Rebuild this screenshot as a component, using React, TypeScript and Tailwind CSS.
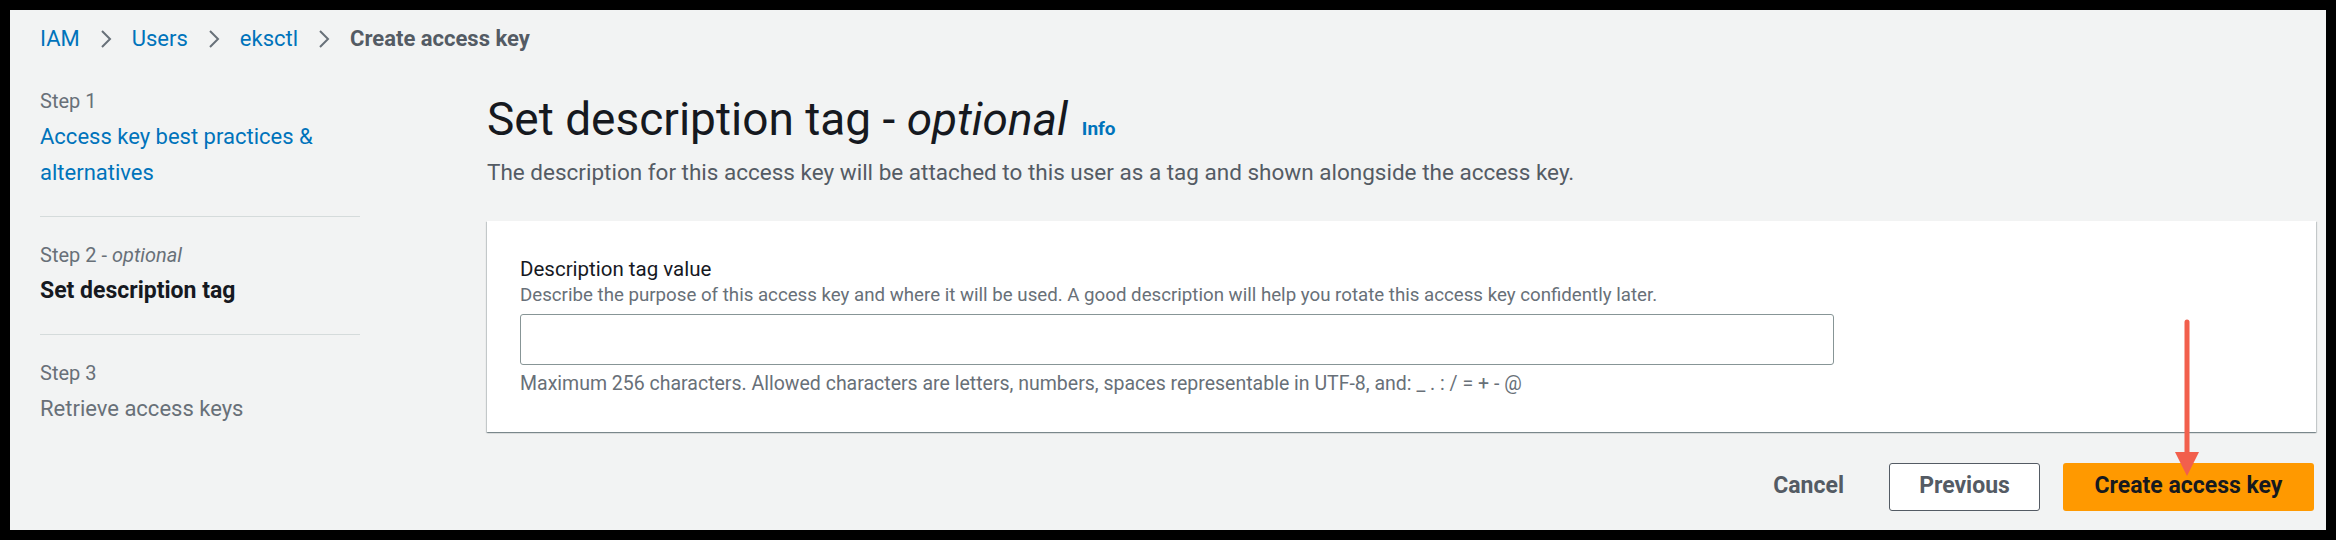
import React from 'react';

const Chevron: React.FC = () => (
  <svg width="16" height="22" viewBox="0 0 16 22" className="mx-[18px]">
    <path d="M4 3 L12 11 L4 19" fill="none" stroke="#687078" strokeWidth="2" />
  </svg>
);

const steps = [
  { label: 'Step 1', optional: false, title: 'Access key best practices & alternatives', state: 'link' },
  { label: 'Step 2', optional: true, title: 'Set description tag', state: 'active' },
  { label: 'Step 3', optional: false, title: 'Retrieve access keys', state: 'disabled' },
];

export default function App() {
  return (
    <div className="bg-black p-[10px] font-['Roboto',sans-serif]">
      <div className="relative h-[520px] bg-[#f2f3f3]">
        {/* breadcrumb */}
        <nav className="flex items-center pl-[30px] pt-[17px] text-[22px] leading-[24px]">
          <a className="text-[#0073bb]">IAM</a>
          <Chevron />
          <a className="text-[#0073bb]">Users</a>
          <Chevron />
          <a className="text-[#0073bb]">eksctl</a>
          <Chevron />
          <span className="font-bold text-[#545b64]">Create access key</span>
        </nav>

        <div className="flex">
          {/* wizard steps */}
          <ul className="ml-[30px] mt-[38px] w-[320px] shrink-0">
            {steps.map((s, i) => (
              <li key={s.label} className={i < steps.length - 1 ? 'border-b border-[#d5dbdb] pb-[25px] mb-[26px]' : ''}>
                <div className="text-[20px] leading-[24px] text-[#687078]">
                  {s.label}
                  {s.optional && <span> - <i>optional</i></span>}
                </div>
                <div
                  className={
                    'mt-[6px] leading-[36px] ' +
                    (s.state === 'link'
                      ? 'text-[22px] text-[#0073bb]'
                      : s.state === 'active'
                        ? 'text-[23px] font-bold text-[#16191f]'
                        : 'text-[22px] text-[#687078]')
                  }
                >
                  {s.title}
                </div>
              </li>
            ))}
          </ul>

          {/* main */}
          <main className="ml-[127px] mr-[10px] mt-[44px] flex-1">
            <div className="flex items-baseline">
              <h1 className="text-[46px] font-normal leading-[48px] text-[#16191f]">
                Set description tag - <i>optional</i>
              </h1>
              <a className="ml-[14px] text-[19px] font-bold text-[#0073bb]">Info</a>
            </div>
            <p className="mt-[14px] text-[22.5px] leading-[28px] text-[#545b64]">
              The description for this access key will be attached to this user as a tag and shown alongside the access key.
            </p>

            <section className="mt-[35px] bg-white px-[33px] pb-[36px] pt-[34px] shadow-[0_1px_1px_0_rgba(0,28,36,0.3),1px_1px_1px_0_rgba(0,28,36,0.15),-1px_1px_1px_0_rgba(0,28,36,0.15)]">
              <label className="block text-[20.5px] leading-[28px] text-[#16191f]">Description tag value</label>
              <div className="text-[18.7px] leading-[24px] text-[#687078]">
                Describe the purpose of this access key and where it will be used. A good description will help you rotate this access key confidently later.
              </div>
              <input
                type="text"
                className="mt-[7px] block h-[51px] w-[1314px] rounded-[3px] border-[1.5px] border-[#879596] bg-white px-3 outline-none"
              />
              <div className="mt-[7px] text-[19.5px] leading-[24px] text-[#687078]">
                Maximum 256 characters. Allowed characters are letters, numbers, spaces representable in UTF-8, and: _ . : / = + - @
              </div>
            </section>

            <div className="mt-[31px] flex justify-end gap-[23px] pr-[2px]">
              <button className="h-[48px] px-[22px] text-[23px] font-bold text-[#545b64]">Cancel</button>
              <button className="h-[48px] w-[151px] rounded-[3px] border-[1.5px] border-[#545b64] bg-white text-[23px] font-bold text-[#545b64]">
                Previous
              </button>
              <button className="h-[48px] w-[251px] rounded-[3px] bg-[#ff9900] text-[23px] font-bold text-[#16191f]">
                Create access key
              </button>
            </div>
          </main>
        </div>

        {/* annotation arrow */}
        <svg className="absolute left-[2165px] top-[308px]" width="24" height="160" viewBox="0 0 24 160">
          <line x1="12" y1="4" x2="12" y2="136" stroke="#f25f4c" strokeWidth="5" strokeLinecap="round" />
          <polygon points="0,134 24,134 12,158" fill="#f25f4c" />
        </svg>
      </div>
    </div>
  );
}
